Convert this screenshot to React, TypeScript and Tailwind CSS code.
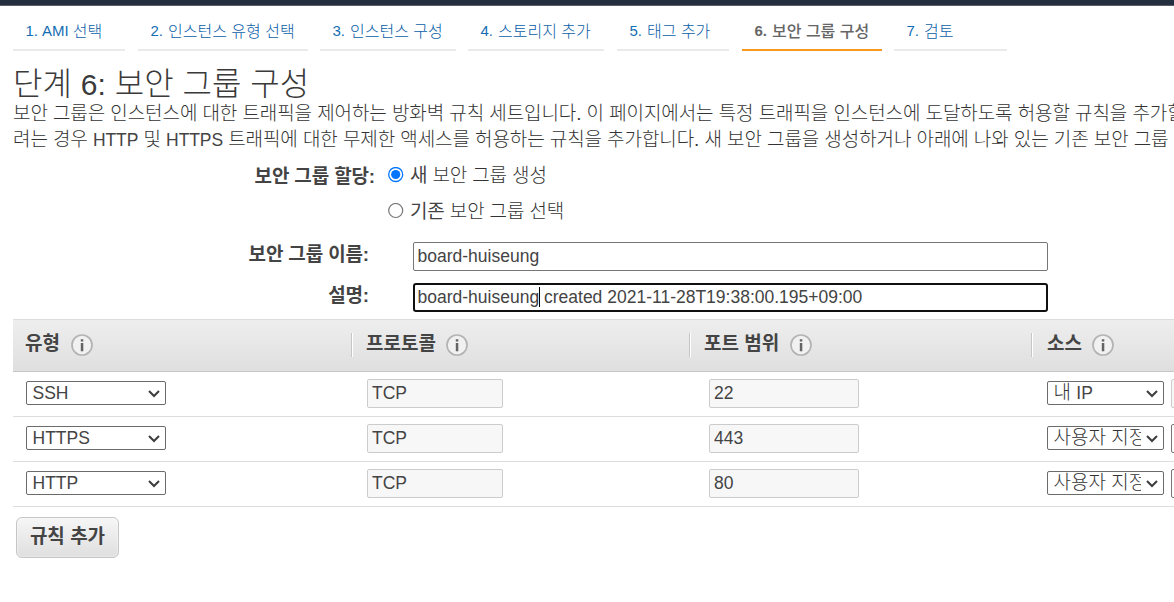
import type { ReactNode } from 'react';

const tabs = [
  { num: '1.', latin: 'AMI', label: '선택', box: 'w-[112px] mr-[13px]' },
  { num: '2.', label: '인스턴스 유형 선택', box: 'w-[170px] mr-[12px]' },
  { num: '3.', label: '인스턴스 구성', box: 'w-[136px] mr-[12px]' },
  { num: '4.', label: '스토리지 추가', box: 'w-[136px] mr-[13px]' },
  { num: '5.', label: '태그 추가', box: 'w-[112px] mr-[13px]' },
  { num: '6.', label: '보안 그룹 구성', box: 'w-[140px] mr-[12px]', active: true },
  { num: '7.', label: '검토', box: 'w-[113px]' },
];

const columns = [
  { label: '유형', box: 'w-[338px] pl-[12px]', gap: 'ml-[11px]' },
  { label: '프로토콜', box: 'w-[338px] pl-[14px]', gap: 'ml-[10px]' },
  { label: '포트 범위', box: 'w-[342px] pl-[14px]', gap: 'ml-[11px]' },
  { label: '소스', box: 'w-[143px] pl-[15px]', gap: 'ml-[10px]' },
];

const rules = [
  { type: 'SSH', protocol: 'TCP', port: '22', source: <>내 <En>IP</En></>, locked: true },
  { type: 'HTTPS', protocol: 'TCP', port: '443', source: '사용자 지정', locked: false },
  { type: 'HTTP', protocol: 'TCP', port: '80', source: '사용자 지정', locked: false },
];

function En({ children }: { children: ReactNode }) {
  return <span className="text-[17.5px] font-normal text-[#444444]">{children}</span>;
}

function InfoIcon() {
  return (
    <svg width="22" height="22" viewBox="0 0 22 22" className="shrink-0">
      <circle cx="11" cy="11" r="10" fill="#f1f1f1" stroke="#b3b3b3" strokeWidth="1.7" />
      <path d="M9.8 5.3h2.5v2.2H9.8zM9.8 9h2.5v8.3H9.8z" fill="#636363" />
    </svg>
  );
}

function Select({ box, children }: { box: string; children: ReactNode }) {
  return (
    <button type="button" className={`flex h-6 shrink-0 items-center rounded-[2px] border border-[#6b6b6b] bg-white pl-[5.5px] pr-[4px] ${box}`}>
      <span className="h-[22px] min-w-0 flex-1 overflow-hidden whitespace-nowrap text-left leading-[22px]">{children}</span>
      <svg width="14" height="10" viewBox="0 0 14 10" className="ml-[4px] mt-[2px] shrink-0" fill="none" stroke="#3d3d3d" strokeWidth="2">
        <path d="M2 2l5 5 5-5" />
      </svg>
    </button>
  );
}

function ReadOnlyField({ value, box }: { value: string; box: string }) {
  return (
    <input readOnly value={value} className={`block h-[29px] rounded-[2px] border border-[#cccccc] bg-[#f7f7f7] pb-[1px] pl-1 text-[17.5px] outline-none ${box}`} />
  );
}

export default function App() {
  return (
    <div className="h-[602px] w-[1174px] overflow-hidden bg-white font-['Liberation_Sans','Noto_Sans_CJK_KR',sans-serif] text-[19px] font-light text-[#444444]">
      <div className="h-[6px] border-b border-[#5b5d6b] bg-[#232f3e]" />

      <nav className="flex h-[45px] pl-[13px]">
        {tabs.map((t) => (
          <a
            key={t.num}
            className={`flex shrink-0 items-center whitespace-nowrap border-b-2 pl-[12.5px] pt-[8px] text-[16px] ${t.box} ${
              t.active ? 'border-[#f7981f] font-medium text-[#666666]' : 'border-[#eaeaea] text-[#0a60a8]'
            }`}
          >
            <span className={`mr-[5px] text-[15px] ${t.active ? 'font-bold' : 'font-normal text-[#146eb4]'}`}>{t.num}</span>
            {t.latin && <span className="-ml-[1px] mr-[4px] text-[15px] text-[#146eb4]">{t.latin}</span>}
            {t.label}
          </a>
        ))}
      </nav>

      <h1 className="mt-[14px] h-[35px] whitespace-nowrap pl-[13px] text-[32px] leading-[38px] text-[#3a3a3a]">단계 <span className="text-[30px]">6:</span> 보안 그룹 구성</h1>

      <p className="mt-[1px] h-[52px] whitespace-nowrap pl-[13px] leading-[26px] tracking-[-0.09px] text-[#333333]">
        보안 그룹은 인스턴스에 대한 트래픽을 제어하는 방화벽 규칙 세트입니다. 이 페이지에서는 특정 트래픽을 인스턴스에 도달하도록 허용할 규칙을 추가할
        <br />
        려는 경우 <En>HTTP</En> 및 <En>HTTPS</En> 트래픽에 대한 무제한 액세스를 허용하는 규칙을 추가합니다. 새 보안 그룹을 생성하거나 아래에 나와 있는 기존 보안 그룹 중
      </p>

      <div className="mt-[4px] flex h-[36px] whitespace-nowrap leading-[38px] tracking-[-0.15px]">
        <div className="w-[375px] pt-px text-right font-bold">보안 그룹 할당:</div>
        <label className="flex items-center pl-[13px]">
          <svg width="16" height="16" viewBox="0 0 16 16" className="mr-[6px]">
            <circle cx="7.7" cy="7.5" r="7" fill="white" stroke="#0075ff" strokeWidth="1.3" />
            <circle cx="7.7" cy="7.5" r="4.6" fill="#0075ff" />
          </svg>
          <span className="pt-[2px] text-[#333333]"><b className="text-[#444444]">새</b> 보안 그룹 생성</span>
        </label>
      </div>
      <div className="flex h-[36px] whitespace-nowrap pl-[375px] leading-[38px] tracking-[-0.15px]">
        <label className="flex items-center pl-[13px]">
          <svg width="16" height="16" viewBox="0 0 16 16" className="mr-[6px]">
            <circle cx="7.7" cy="7.5" r="7" fill="white" stroke="#767676" strokeWidth="1.2" />
          </svg>
          <span className="pt-[2px] text-[#333333]"><b className="text-[#444444]">기존</b> 보안 그룹 선택</span>
        </label>
      </div>

      <div className="mt-[13px] flex h-[29px]">
        <div className="w-[369px] whitespace-nowrap text-right font-bold leading-[26px] tracking-[-0.15px]">보안 그룹 이름:</div>
        <input readOnly value="board-huiseung" className="ml-[44px] h-[29px] w-[635px] rounded-[2px] border border-[#767676] pb-[1px] pl-[3.5px] text-[17.5px] font-normal outline-none" />
      </div>
      <div className="mt-[12px] flex h-[29px]">
        <div className="w-[369px] whitespace-nowrap text-right font-bold leading-[26px] tracking-[-0.15px]">설명:</div>
        <div className="relative ml-[44px] h-[29px] w-[635px]">
          <input readOnly value="board-huiseung created 2021-11-28T19:38:00.195+09:00" className="block h-[29px] w-full rounded-[3px] border-2 border-[#101010] bg-white pb-[1px] pl-[2.5px] text-[17.5px] font-normal outline-none" />
          <span className="absolute left-[126px] top-[4px] h-[20px] w-px bg-black" />
        </div>
      </div>

      <div className="ml-[13px] mt-[7px]">
        <div className="flex h-[53px] w-[1161px] border-b border-t border-b-[#c6c6c6] border-t-[#dddddd] bg-linear-to-b from-[#eeeeee] to-[#dfdfdf]">
          {columns.map((c, i) => (
            <div key={c.label} className="flex shrink-0 pt-[13px]">
              <div className={`flex h-6 items-center whitespace-nowrap font-bold leading-6 ${c.box} ${i > 0 ? 'border-l border-[#c6c6c6] shadow-[inset_1px_0_0_white]' : ''}`}>
                <span className="relative -top-px">{c.label}</span>
                <span className={c.gap}><InfoIcon /></span>
              </div>
            </div>
          ))}
        </div>
        {rules.map((r) => (
          <div key={r.type} className="flex h-[45px] w-[1161px] items-start overflow-hidden border-b border-[#dddddd] pt-[7px] font-normal">
            <div className="w-[354px] shrink-0 pl-[13px] pt-[2px]">
              <Select box="w-[140px]"><En>{r.type}</En></Select>
            </div>
            <div className="w-[342px] shrink-0"><ReadOnlyField value={r.protocol} box="w-[136px]" /></div>
            <div className="w-[338px] shrink-0"><ReadOnlyField value={r.port} box="w-[150px]" /></div>
            <Select box="mt-[2px] w-[117px] font-light text-[#333333]">{r.source}</Select>
            <div className={`ml-[7px] h-[29px] w-10 shrink-0 rounded-[2px] border ${r.locked ? 'border-[#cccccc] bg-[#f7f7f7]' : 'border-[#767676] bg-white'}`} />
          </div>
        ))}
      </div>

      <button type="button" className="ml-[16px] mt-[10px] flex h-[41px] w-[103px] items-center justify-center whitespace-nowrap rounded-[6px] border border-[#c6c6c6] bg-linear-to-b from-[#f6f6f6] to-[#dfdfdf] pb-px font-bold shadow-[inset_0_0_2px_white]">
        규칙 추가
      </button>
    </div>
  );
}
